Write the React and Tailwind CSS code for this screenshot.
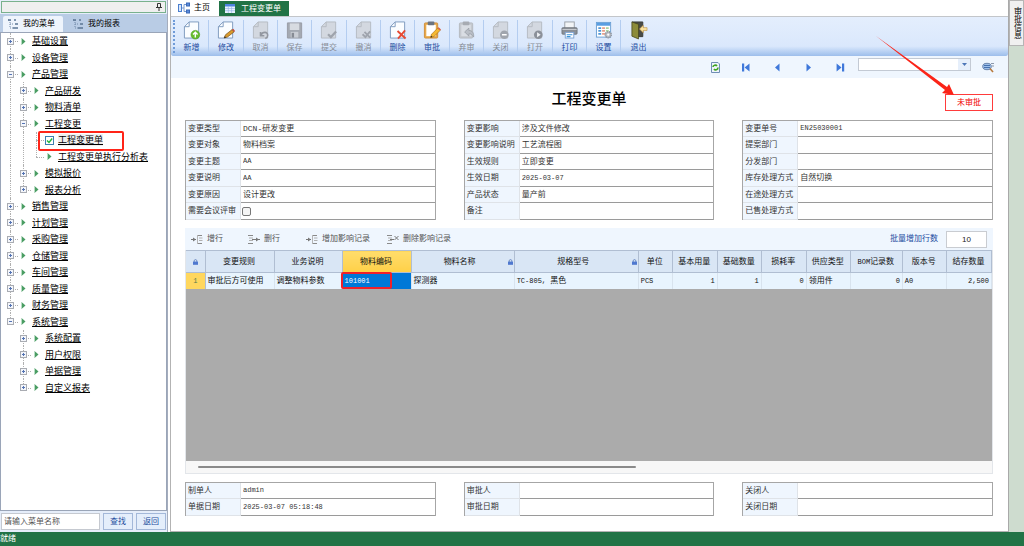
import React from "react";

const menu = [
  { name: "基础设置", depth: 0, icon: "plus", lines: [1] },
  { name: "设备管理", depth: 0, icon: "plus", lines: [1] },
  { name: "产品管理", depth: 0, icon: "minus", lines: [1] },
  { name: "产品研发", depth: 1, icon: "plus", lines: [1, 1] },
  { name: "物料清单", depth: 1, icon: "plus", lines: [1, 1] },
  { name: "工程变更", depth: 1, icon: "minus", lines: [1, 1] },
  { name: "工程变更单", depth: 2, active: true, lines: [1, 1, 1] },
  { name: "工程变更单执行分析表", depth: 2, lines: [1, 1, 2] },
  { name: "模拟报价", depth: 1, icon: "plus", lines: [1, 1] },
  { name: "报表分析", depth: 1, icon: "plus", lines: [1, 2] },
  { name: "销售管理", depth: 0, icon: "plus", lines: [1] },
  { name: "计划管理", depth: 0, icon: "plus", lines: [1] },
  { name: "采购管理", depth: 0, icon: "plus", lines: [1] },
  { name: "仓储管理", depth: 0, icon: "plus", lines: [1] },
  { name: "车间管理", depth: 0, icon: "plus", lines: [1] },
  { name: "质量管理", depth: 0, icon: "plus", lines: [1] },
  { name: "财务管理", depth: 0, icon: "plus", lines: [1] },
  { name: "系统管理", depth: 0, icon: "minus", lines: [2] },
  { name: "系统配置", depth: 1, icon: "plus", lines: [0, 1] },
  { name: "用户权限", depth: 1, icon: "plus", lines: [0, 1] },
  { name: "单据管理", depth: 1, icon: "plus", lines: [0, 1] },
  { name: "自定义报表", depth: 1, icon: "plus", lines: [0, 2] },
];

const tools = [
  { name: "新增", icon: "add" },
  { name: "修改", icon: "edit" },
  { name: "取消", icon: "undo", off: true },
  { name: "保存", icon: "save", off: true },
  { name: "提交", icon: "submit", off: true },
  { name: "撤消", icon: "revoke", off: true },
  { name: "删除", icon: "delete" },
  { name: "审批", icon: "approve" },
  { name: "弃审", icon: "unapprove", off: true },
  { name: "关闭", icon: "close", off: true },
  { name: "打开", icon: "open", off: true },
  { name: "打印", icon: "print" },
  { name: "设置", icon: "settings" },
  { name: "退出", icon: "exit" },
];

const headerFields = [
  [
    ["变更类型", "DCN-研发变更"],
    ["变更对象", "物料档案"],
    ["变更主题", "AA"],
    ["变更说明", "AA"],
    ["变更原因", "设计更改"],
    ["需要会议评审", false],
  ],
  [
    ["变更影响", "涉及文件修改"],
    ["变更影响说明", "工艺流程图"],
    ["生效规则", "立即变更"],
    ["生效日期", "2025-03-07"],
    ["产品状态", "量产前"],
    ["备注", ""],
  ],
  [
    ["变更单号", "EN25030001"],
    ["提案部门", ""],
    ["分发部门", ""],
    ["库存处理方式", "自然切换"],
    ["在途处理方式", ""],
    ["已售处理方式", ""],
  ],
];

const footerFields = [
  [
    ["制单人", "admin"],
    ["单据日期", "2025-03-07 05:18:48"],
  ],
  [
    ["审批人", ""],
    ["审批日期", ""],
  ],
  [
    ["关闭人", ""],
    ["关闭日期", ""],
  ],
];

const columns = [
  { title: "变更规则", width: "w-[69px]", value: "审批后方可使用" },
  { title: "业务说明", width: "w-[68px]", value: "调整物料参数" },
  { title: "物料编码", width: "w-[69px]", value: "101001", selected: true },
  { title: "物料名称", width: "w-[103px]", value: "探测器", lock: true },
  { title: "规格型号", width: "w-[124px]", value: "TC-805, 黑色", lock: true },
  { title: "单位", width: "w-[34px]", value: "PCS" },
  { title: "基本用量", width: "w-[45px]", value: "1", right: true },
  { title: "基础数量", width: "w-[44px]", value: "1", right: true },
  { title: "损耗率", width: "w-[45px]", value: "0", right: true },
  { title: "供应类型", width: "w-[44px]", value: "领用件" },
  { title: "BOM记录数", width: "w-[52px]", value: "0", right: true },
  { title: "版本号", width: "w-[44px]", value: "A0" },
  { title: "结存数量", width: "w-[45px]", value: "2,500", right: true },
];

// Latin runs use the narrow monospace face, the rest stays in the CJK face
const Txt = ({ children }) =>
  children.split(/([\x20-\x7e]+)/).map((part, i) =>
    /^[\x20-\x7e]+$/.test(part) ? (
      <span
        key={i}
        className="font-['Liberation_Mono',monospace] text-[7px] whitespace-pre"
      >
        {part}
      </span>
    ) : (
      part
    )
  );

const Doc = ({ off }) => (
  <path
    d="M6.5 1.5H16.5V18.5H1.5V6.5Z M6.5 1.5V6.5H1.5"
    fill={off ? "#d3d8e0" : "#fbfdff"}
    stroke={off ? "#b5bac2" : "#7d99bd"}
  />
);

const Clipboard = ({ off }) => (
  <>
    <rect x="1.5" y="2.5" width="14" height="16" rx="1" fill={off ? "#c5c9cf" : "#e8a94a"} stroke={off ? "#b5b9bf" : "#cf8f3c"} />
    <rect x="3.5" y="4.5" width="10" height="12" fill={off ? "#d9dde3" : "#fff"} />
    <rect x="5" y="1" width="7" height="4" rx="1" fill={off ? "#a7abb2" : "#6c7480"} />
  </>
);

const Pencil = () => (
  <>
    <path d="M8 18L9 14.5L15.5 8L18 10.5L11.5 17Z" fill="#f5b932" stroke="#a9711c" strokeWidth="0.7" />
    <path d="M15.5 8L16.5 7L19 9.5L18 10.5Z" fill="#d9573d" />
    <path d="M8 18L8.5 16L10 17.5Z" fill="#222" />
  </>
);

const toolIcons = {
  add: (
    <>
      <Doc />
      <circle cx="13" cy="15" r="4.6" fill="#67bd2d" stroke="#4a9a1b" strokeWidth="0.6" />
      <path d="M13 18V12.6M10.6 14.8L13 12.4L15.4 14.8" stroke="#fff" strokeWidth="1.5" fill="none" />
    </>
  ),
  edit: (
    <>
      <Doc />
      <path d="M7.5 18.5L9 15L16 9.5L18 12L11 17.5Z" fill="#d99a2c" stroke="#6d4a18" strokeWidth="0.7" />
      <path d="M7.5 18.5L8.2 16.7L9.6 18Z" fill="#222" />
      <path d="M16 9.5L17.2 8.6L19 11L18 12Z" fill="#c9483a" />
    </>
  ),
  undo: (
    <>
      <Doc off />
      <path d="M9 12V16H13M9.5 15.5C11 11.5 17 11.5 16.5 16C16.4 17.5 15.5 18.5 14 19" stroke="#9297a0" strokeWidth="1.7" fill="none" />
    </>
  ),
  save: (
    <>
      <path d="M1.5 2.5H16.5V18.5H1.5Z" fill="#a4a9b2" stroke="#979ca5" />
      <rect x="4" y="3" width="10" height="7" fill="#d7dbe1" />
      <rect x="5" y="12" width="8" height="6" fill="#c9cdd4" />
      <rect x="6" y="13" width="2.5" height="5" fill="#868b94" />
    </>
  ),
  submit: (
    <>
      <Doc off />
      <path d="M8.5 14.5L11.5 17.5L17 11.5" stroke="#9fa4ad" strokeWidth="2.4" fill="none" />
    </>
  ),
  revoke: (
    <>
      <Doc off />
      <path d="M8 14.5L11 17.5L16 11.5M10 12L16 18" stroke="#9fa4ad" strokeWidth="2" fill="none" />
    </>
  ),
  delete: (
    <>
      <Doc />
      <path d="M9 11L17.5 19M17 10.5L9.5 19" stroke="#e64a33" strokeWidth="2" fill="none" />
    </>
  ),
  approve: (
    <>
      <Clipboard />
      <Pencil />
    </>
  ),
  unapprove: (
    <>
      <Clipboard off />
      <path d="M7 12L11.5 8V10.5C15 10.5 17 13 16.5 17.5C15.5 15 14 14 11.5 14V16.5Z" fill="#b9bec6" stroke="#989da5" strokeWidth="0.8" />
    </>
  ),
  close: (
    <>
      <Doc off />
      <circle cx="13" cy="15" r="4.6" fill="#a0a5ad" />
      <path d="M10.5 15H15.5" stroke="#fff" strokeWidth="1.6" />
    </>
  ),
  open: (
    <>
      <Doc off />
      <circle cx="13" cy="15" r="4.6" fill="#8b9099" />
      <path d="M11.7 12.3L15.5 15L11.7 17.7Z" fill="#eef1f5" />
    </>
  ),
  print: (
    <>
      <rect x="4" y="1.5" width="10" height="8" fill="#f2f4f6" stroke="#9a9fa6" />
      <rect x="1" y="7.5" width="16" height="7" rx="1" fill="#8b9097" stroke="#6a6f77" strokeWidth="0.8" />
      <path d="M1.5 9.5H16.5" stroke="#c9cdd2" />
      <rect x="4.5" y="12.5" width="9" height="6" fill="#fff" stroke="#7fa4d4" />
      <path d="M6 15H12M6 17H10" stroke="#3b94d9" strokeWidth="1.2" />
    </>
  ),
  settings: (
    <>
      <rect x="1.5" y="2" width="15" height="15.5" fill="#fff" stroke="#6a9fd4" />
      <rect x="2" y="2.5" width="14" height="3" fill="#5a9ee2" />
      <path d="M3.5 8H6.5M3.5 11H6.5M3.5 14H6.5" stroke="#4f96d6" strokeWidth="1.8" />
      <path d="M7.5 8H10.5M7.5 11H10.5M7.5 14H10.5" stroke="#e6a08c" strokeWidth="1.8" />
      <path d="M11.5 8H14.5M11.5 11H14.5" stroke="#a9d4a0" strokeWidth="1.8" />
      <circle cx="14" cy="15" r="3.2" fill="#b9bec5" stroke="#8b9098" strokeWidth="1.4" strokeDasharray="1.4 0.8" />
      <circle cx="14" cy="15" r="1.2" fill="#fff" />
    </>
  ),
  exit: (
    <>
      <path d="M2 1.5H13.5V17H8" fill="#4a4c46" stroke="#3a3c38" />
      <path d="M2 1.5L9 4V19.5L2 16.5Z" fill="#8b8b3a" stroke="#45451d" strokeWidth="0.8" />
      <path d="M10 9L14 5V7.5H18V10.5H14V13Z" fill="#fbe3a0" stroke="#c08e3a" strokeWidth="0.6" />
    </>
  ),
};

const ListIcon = () => (
  <svg className="w-3 h-3" viewBox="0 0 12 12" fill="none">
    <path d="M1 2H3M3 2V10M3 6H6M3 10H6" stroke="#7189a8" strokeDasharray="1 1" />
    <path d="M1 2H4M7 2H9M8 6H11M6 10H11" stroke="#5b7594" strokeWidth="1.5" />
  </svg>
);

const LockIcon = () => (
  <svg className="w-[5px] h-[6px] shrink-0" viewBox="0 0 5 6">
    <path d="M1.2 3V1.8C1.2 0.2 3.8 0.2 3.8 1.8V3" fill="none" stroke="#5878b8" strokeWidth="0.8" />
    <rect x="0" y="2.6" width="5" height="3.2" fill="#4f78cf" />
  </svg>
);

const RowIcon = ({ type }) => (
  <svg className="w-3 h-[10px]" viewBox="0 0 12 10" fill="none">
    {type === "add" ? (
      <>
        <path d="M0 5.5H5" stroke="#777" />
        <path d="M2 3.5L5 5.5L2 7.5Z" fill="#777" />
        <path d="M6.5 1V10" stroke="#b5b5b5" />
        <path d="M7 1.5H11M7 9.5H11" stroke="#8a8a8a" />
        <path d="M8 4H11.5M8 6.5H11.5" stroke="#b0b0b0" />
      </>
    ) : (
      <>
        <path d="M0 1.5H5M0 9.5H5" stroke="#8a8a8a" />
        <path d="M1 4H5M1 6.5H5" stroke="#b0b0b0" />
        {type === "clear" ? (
          <>
            <path d="M3 5.5H7" stroke="#777" />
            <path d="M7.5 2L11.5 6M11.5 2L7.5 6" stroke="#777" />
          </>
        ) : (
          <>
            <path d="M4 5.5H12" stroke="#777" />
            <path d="M8 3.5L11 5.5L8 7.5Z" fill="#777" />
          </>
        )}
      </>
    )}
  </svg>
);

const TreeRow = ({ item }) => (
  <li className="relative flex items-center odd:h-4 even:h-[17px]">
    {item.lines.map((line, i) => {
      const own = i === item.depth;
      return (
        <span key={i} className="relative w-[13px] h-full shrink-0">
          {line > 0 && (
            <span
              className={`absolute left-[6px] top-0 border-l border-dotted border-[#b0b0b0] ${
                line === 2 ? "h-1/2" : "h-full"
              }`}
            />
          )}
          {own && (
            <span className="absolute left-[6px] top-1/2 w-[8px] border-t border-dotted border-[#b0b0b0]" />
          )}
          {own && item.icon && (
            <svg className="absolute left-[3px] top-[5px] w-[7px] h-[7px]" viewBox="0 0 7 7">
              <rect x="0.5" y="0.5" width="6" height="6" fill="#f4f6fb" stroke="#a9acb2" />
              <path d={item.icon === "plus" ? "M2 3.5H5M3.5 2V5" : "M2 3.5H5"} stroke="#5474b4" />
            </svg>
          )}
        </span>
      );
    })}
    <span className="w-[13px] shrink-0 flex justify-center">
      {item.active ? (
        <svg className="w-[9px] h-[9px]" viewBox="0 0 9 9" fill="none">
          <rect x="0.5" y="0.5" width="8" height="8" fill="#fff" stroke="#3c7fb1" />
          <path d="M2 4.5L4 6.5L7.2 2.5" stroke="#1fb53a" strokeWidth="1.4" />
        </svg>
      ) : (
        <svg className="w-[5px] h-[7px]" viewBox="0 0 5 7">
          <path d="M0.5 0L4.5 3.5L0.5 7Z" fill="#4a9d63" />
          <path d="M0.5 1V6" stroke="#b9dcc4" />
        </svg>
      )}
    </span>
    <a
      href="#"
      className={`ml-[2px] text-[9px] leading-3 text-black underline underline-offset-1 whitespace-nowrap ${
        item.active ? "bg-[#f0f0f0]" : ""
      }`}
    >
      {item.name}
    </a>
    {item.active && (
      <span className="absolute left-[34px] -top-px w-[86px] h-[20px] border-2 border-[#ff2418] rounded-xs" />
    )}
  </li>
);

const Sidebar = () => (
  <aside className="w-[168px] shrink-0 flex flex-col bg-[#e6eefa] border-r border-[#a5adbd]">
    <div className="m-px h-[12px] flex items-center justify-end pr-[3px] bg-[#efefef] border border-[#79b18d]">
      <svg className="w-[6px] h-[8px]" viewBox="0 0 6 8" fill="none" stroke="#333">
        <path d="M1.5 0.5H4.5V4.5M1.5 0.5V4.5M0 4.5H6M3 4.5V8" />
      </svg>
    </div>
    <div className="h-[18px] flex items-end bg-[#b9cce5] pl-[3px]">
      <button className="h-4 w-[60px] flex items-center gap-1 pl-1 rounded-t-xs bg-[#eef4fc] text-[8px] text-black">
        <ListIcon />
        我的菜单
      </button>
      <button className="h-4 flex items-center gap-1 pl-[9px] text-[8px] text-black">
        <ListIcon />
        我的报表
      </button>
    </div>
    <ul className="flex-1 min-h-0 bg-white border border-[#9aa5b8] pl-[3px]">
      {menu.map((item) => (
        <TreeRow key={item.name} item={item} />
      ))}
    </ul>
    <div className="flex gap-[3px] px-px py-[2px] text-[8px]">
      <input
        type="text"
        aria-label="菜单名称"
        placeholder="请输入菜单名称"
        className="flex-1 min-w-0 h-[17px] px-[2px] bg-white border border-[#c5c9d0] placeholder:text-[#555]"
      />
      <button className="w-[30px] border border-[#a3b8d9] bg-[#e4eefb] text-[#1f4ea0]">
        查找
      </button>
      <button className="w-[30px] border border-[#a3b8d9] bg-[#e4eefb] text-[#1f4ea0]">
        返回
      </button>
    </div>
  </aside>
);

const TabBar = () => (
  <div className="h-4 flex text-[8px] pl-[7px]">
    <button className="flex items-center gap-1 text-black">
      <svg className="w-3 h-3" viewBox="0 0 12 12" fill="none">
        <rect x="0.5" y="2.5" width="3" height="7" fill="#dbe8fb" stroke="#4b7fce" />
        <path d="M4 6H6M6 2.5V9.5M6 2.5H8M6 9.5H8" stroke="#7a9bd0" />
        <rect x="8.5" y="1" width="3" height="3" fill="#5c8ddb" stroke="#3b69b8" />
        <rect x="8.5" y="8" width="3" height="3" fill="#5c8ddb" stroke="#3b69b8" />
      </svg>
      主页
    </button>
    <button className="ml-[9px] mt-px w-[70px] flex items-center gap-[6px] pl-[6px] bg-[#217346] text-white">
      <svg className="w-[10px] h-[9px]" viewBox="0 0 10 9">
        <rect width="10" height="9" fill="#eaf2ff" />
        <rect width="10" height="2.5" fill="#4f83e0" />
        <path d="M0 4.5H10M0 6.7H10M3.3 2V9M6.6 2V9" stroke="#8fb0e6" strokeWidth="0.6" />
      </svg>
      工程变更单
    </button>
  </div>
);

const Toolbar = () => (
  <div className="h-[40px] flex items-stretch border-t border-[#c3c6ca] bg-linear-to-b from-[#e4eefd] via-[#dae8fc] via-75% to-[#9dbeeb] rounded-b-xs">
    <span className="ml-[2px] my-[3px] border-l-2 border-dotted border-[#6f9bd8]" />
    {tools.map((tool) => (
      <button
        key={tool.name}
        disabled={tool.off}
        className="w-[34px] nth-[3n]:w-[35px] my-[3px] flex flex-col items-center border-r border-[#b4cdf0] last:border-r-0"
      >
        <svg className="w-[18px] h-[20px] shrink-0" viewBox="0 0 19 20" fill="none">
          {toolIcons[tool.icon]}
        </svg>
        <span
          className={`mt-[2px] text-[8px] leading-[12px] ${
            tool.off ? "text-[#858b94]" : "text-[#1d4c9e]"
          }`}
        >
          {tool.name}
        </span>
      </button>
    ))}
  </div>
);

const NavButton = ({ label, children }) => (
  <button aria-label={label} className="w-[11px] h-[11px]">
    <svg className="w-[11px] h-[11px]" viewBox="0 0 11 11" fill="#3f78da">
      {children}
    </svg>
  </button>
);

const RecordNav = () => (
  <div className="h-[22px] flex items-center justify-end pr-[14px] bg-[#eff6fe]">
    <div className="flex gap-5 mr-[13px]">
      <NavButton label="刷新">
        <path d="M1.5 0.5H8L9.5 2V10.5H1.5Z" fill="#eef4fb" stroke="#6f8eb5" />
        <path d="M3 5C3 3 6 2.5 7 4M8 5.5C8 8 5 8.5 4 7" fill="none" stroke="#3fa51f" strokeWidth="1.6" />
      </NavButton>
      <NavButton label="第一条">
        <path d="M1 1.5H3.2V9.5H1Z M8.5 1.5V9.5L3.6 5.5Z" />
      </NavButton>
      <NavButton label="上一条">
        <path d="M7.5 1.5V9.5L3 5.5Z" />
      </NavButton>
      <NavButton label="下一条">
        <path d="M3.5 1.5V9.5L8 5.5Z" />
      </NavButton>
      <NavButton label="最后一条">
        <path d="M8 1.5H10.2V9.5H8Z M2.6 1.5V9.5L7.5 5.5Z" />
      </NavButton>
    </div>
    <div className="relative w-[113px] h-[13px] mb-[5px]">
      <select
        aria-label="查询方案"
        className="block w-full h-full appearance-none bg-white border border-[#c3cad4] text-[8px]"
      />
      <span className="absolute right-px top-px w-3 h-[11px] bg-[#e6effb] pointer-events-none flex items-center justify-center">
        <svg className="w-[5px] h-[3px]" viewBox="0 0 5 3">
          <path d="M0 0H5L2.5 3Z" fill="#4c76b8" />
        </svg>
      </span>
    </div>
    <button aria-label="查找" className="ml-[11px]">
      <svg className="w-3 h-3" viewBox="0 0 12 12" fill="none">
        <ellipse cx="5" cy="5.5" rx="4.3" ry="3.2" fill="#9dc0ea" stroke="#6a84ab" />
        <path d="M2 4.5H8M2 6.5H8" stroke="#4671b0" />
        <path d="M8 7.5L11 11" stroke="#b8793b" strokeWidth="1.6" />
        <path d="M9 2.5H12M10 5H12" stroke="#8b98ab" />
      </svg>
    </button>
  </div>
);

const Field = ({ label, value }) => (
  <div className="flex odd:h-4 even:h-[17px]">
    <label
      htmlFor={label}
      className="w-[55px] shrink-0 flex items-center pl-[2px] bg-[#eff6fe] border-b border-r border-[#dfe3e8] text-[8px] whitespace-nowrap"
    >
      {label}
    </label>
    {value === false ? (
      <span className="flex-1 flex items-center border-b border-[#9a9a9a]">
        <input
          id={label}
          type="checkbox"
          className="appearance-none size-[9px] ml-px border border-[#777] rounded-xs bg-[#f4f4f4]"
        />
      </span>
    ) : (
      <input
        id={label}
        type="text"
        readOnly
        defaultValue={value}
        className={`flex-1 min-w-0 px-[2px] border-b border-[#9a9a9a] font-['Liberation_Mono','Noto_Sans_CJK_SC',monospace] ${
          /^[\x20-\x7e]*$/.test(value) ? "text-[7px]" : "text-[8px]"
        }`}
      />
    )}
  </div>
);

const FieldGroups = ({ groups }) => (
  <div className="grid grid-cols-3 gap-x-7">
    {groups.map((fields, i) => (
      <div key={i} className="border-t border-x border-[#a6a6a6]">
        {fields.map(([label, value]) => (
          <Field key={label} label={label} value={value} />
        ))}
      </div>
    ))}
  </div>
);

const DetailGrid = () => (
  <section className="flex-1 min-h-0 flex flex-col mt-2">
    {/* Row actions */}
    <div className="h-[22px] shrink-0 flex items-center px-[6px] bg-[#eff6fe] text-[8px] text-[#555]">
      <button className="flex items-center gap-1">
        <RowIcon type="add" />
        增行
      </button>
      <button className="flex items-center gap-1 ml-[25px]">
        <RowIcon type="remove" />
        删行
      </button>
      <button className="flex items-center gap-1 ml-[26px]">
        <RowIcon type="add" />
        增加影响记录
      </button>
      <button className="flex items-center gap-1 ml-[17px]">
        <RowIcon type="clear" />
        删除影响记录
      </button>
      <label htmlFor="batch" className="ml-auto mr-[8px] text-[#1d4c9e]">
        批量增加行数
      </label>
      <input
        id="batch"
        type="text"
        defaultValue="10"
        className="w-[41px] h-[17px] bg-white border border-[#c9ccd1] text-center text-[8px] text-[#222]"
      />
    </div>

    {/* Detail lines */}
    <div className="flex-1 min-h-0 bg-[#ababab] border-x border-[#e3e6ea]">
      <table className="w-full table-fixed border-collapse text-[8px] leading-[10px] text-[#111]">
        <thead>
          <tr className="h-[22px] bg-[#d9e6f5]">
            <th className="w-[19px] border-r border-b border-t border-[#b0bed2]">
              <span className="flex justify-center">
                <LockIcon />
              </span>
            </th>
            {columns.map((col) => (
              <th
                key={col.title}
                className={`${col.width} border-r border-b border-t border-[#b0bed2] p-0 font-normal whitespace-nowrap ${
                  col.selected ? "bg-linear-to-b from-[#ffdd6b] to-[#ffd046]" : ""
                }`}
              >
                <span className="flex items-center pr-px">
                  <span className="flex-1">
                    <Txt>{col.title}</Txt>
                  </span>
                  {col.lock && <LockIcon />}
                </span>
              </th>
            ))}
          </tr>
        </thead>
        <tbody>
          <tr className="h-4 bg-[#e8f4fe]">
            <td className="border-r border-[#b0bed2] bg-[#ffd75e] p-0 text-center text-[#5a7d4e]">
              <Txt>1</Txt>
            </td>
            {columns.map((col) => (
              <td
                key={col.title}
                className={`relative px-[2px] py-0 whitespace-nowrap border-r border-[#d8e3ee] ${
                  col.right ? "text-right" : ""
                } ${col.selected ? "bg-[#0078d7] text-white" : ""}`}
              >
                <Txt>{col.value}</Txt>
                {col.selected && (
                  <span className="absolute -left-[2px] -top-px w-[51px] h-[17px] border-2 border-[#f0202a] rounded-xs" />
                )}
              </td>
            ))}
          </tr>
        </tbody>
      </table>
    </div>

    {/* Horizontal scroll */}
    <div className="h-[13px] shrink-0 flex items-center px-3 border border-t-0 border-[#e3e6ea] bg-[#f7f7f7]">
      <span className="w-[56%] h-[2px] bg-[#8a8a8a] rounded-full" />
    </div>
  </section>
);

const App = () => {
  return (
    <div className="h-screen flex flex-col overflow-hidden bg-white text-[#333] font-['Liberation_Sans','Noto_Sans_CJK_SC',sans-serif]">
      <div className="flex-1 min-h-0 flex">
        <Sidebar />

        <main className="flex-1 min-w-0 flex flex-col ml-[2px] border-l border-b border-[#b3b3b3]">
          <TabBar />
          <Toolbar />
          <RecordNav />

          <div className="flex-1 min-h-0 flex flex-col pl-[14px] pr-[15px] pb-[15px]">
            <div className="relative h-[42px] shrink-0 flex items-center justify-center">
              <h1 className="text-[15px] leading-5 font-medium text-black">工程变更单</h1>
              <div className="absolute right-0 top-4 w-[48px] h-[17px] flex items-center justify-center border border-[#ff3b3b] text-[8px] text-[#f00000]">
                未审批
                <svg
                  className="absolute -left-[70px] -top-[59px] w-[80px] h-[60px]"
                  viewBox="0 0 80 60"
                  fill="#fb2418"
                >
                  <path d="M0 0L71 51L73 48L78 59L66 57L69 54Z" />
                </svg>
              </div>
            </div>
            <FieldGroups groups={headerFields} />
            <DetailGrid />
            <div className="mt-2">
              <FieldGroups groups={footerFields} />
            </div>
          </div>
        </main>

        {/* Collapsed side panel */}
        <aside className="w-4 shrink-0 bg-[#cedccf] border-l border-[#a9a9a9]">
          <button className="w-full h-[46px] flex items-center justify-center border border-[#b5b5b5] bg-[#f0f0f0] text-[8px] text-black [writing-mode:vertical-rl]">
            审批信息
          </button>
        </aside>
      </div>

      <footer className="h-[14px] shrink-0 flex items-center bg-[#217346] text-[8px] text-white">
        就绪
      </footer>
    </div>
  );
};

export default App;
